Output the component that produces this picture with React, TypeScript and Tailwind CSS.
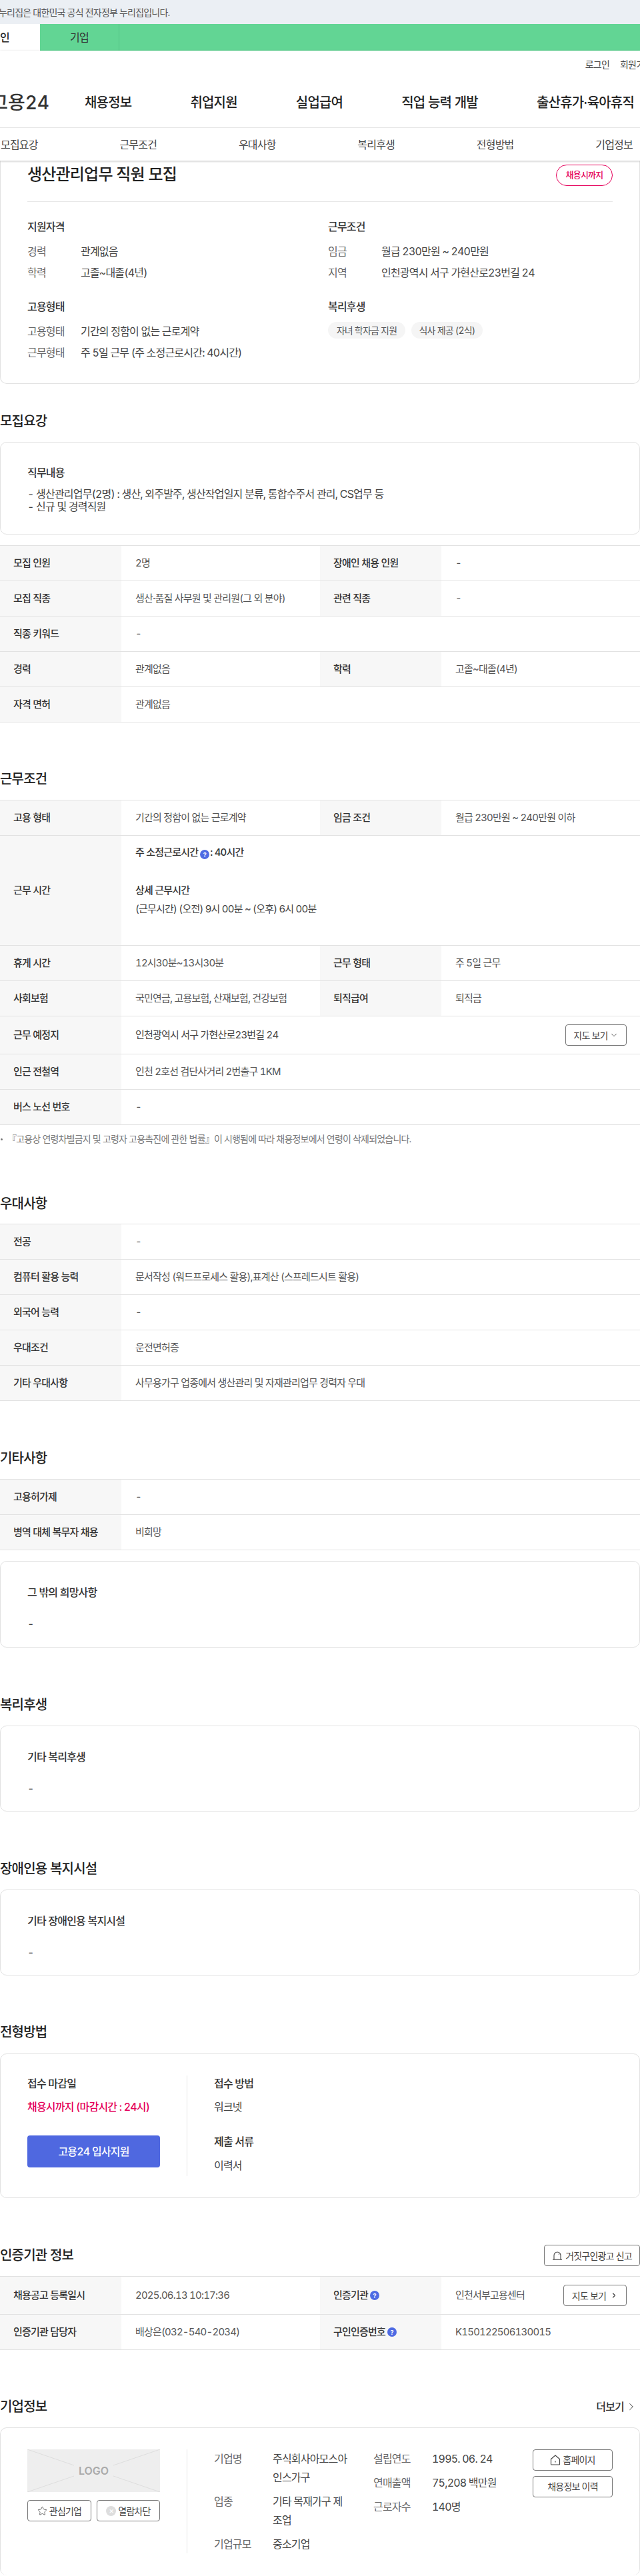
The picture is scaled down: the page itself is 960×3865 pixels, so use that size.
import { ChevronDown, ChevronRight, Star } from "lucide-react";
import type { ReactNode } from "react";

const FONT = "font-['Inter','Noto_Sans_CJK_KR','Noto_Sans',sans-serif]";

type Cell = { label: ReactNode; value: ReactNode };

function Help() {
  return (
    <span className="ml-[3px] mr-[1px] inline-flex h-[14px] w-[14px] items-center justify-center rounded-full bg-[#4f6be3] align-[-2px] text-[9px] font-bold leading-none tracking-normal text-white">
      ?
    </span>
  );
}

function HomeIcon() {
  return (
    <svg viewBox="0 0 16 16" fill="none" stroke="currentColor" strokeWidth="1.2" className="h-[16px] w-[16px] shrink-0">
      <path d="M1.5 6.5 8 1l6.5 5.5v7.7a.8.8 0 0 1-.8.8H2.3a.8.8 0 0 1-.8-.8Z" />
      <path d="M8 9.5V11.5" />
    </svg>
  );
}

function AlarmIcon() {
  return (
    <svg viewBox="0 0 16 14" fill="none" stroke="currentColor" strokeWidth="1.1" className="h-[14px] w-[16px] shrink-0">
      <path d="M3 13V7a5 5 0 0 1 10 0v6" />
      <path d="M1 13.2h14" />
      <path d="M10.5 4.5v1.5" />
    </svg>
  );
}

function SectionTitle({ children }: { children: ReactNode }) {
  return <h2 className="text-[20px] font-medium leading-[30px] text-[#222]">{children}</h2>;
}

function Row({ cells, height = "h-[53px]" }: { cells: Cell[]; height?: string }) {
  return (
    <div className={`flex border-b border-[#e2e2e2] ${height}`}>
      {cells.map((cell, i) => (
        <div key={i} className={`flex ${cells.length === 1 ? "w-full" : "w-1/2"}`}>
          <div className="flex w-[182px] shrink-0 items-center bg-[#f7f7f7] pl-[20px] font-medium text-[#333]">{cell.label}</div>
          <div className="flex min-w-0 flex-1 items-center pl-[21px] text-[#555]">{cell.value}</div>
        </div>
      ))}
    </div>
  );
}

function Table({ children }: { children: ReactNode }) {
  return <div className="border-t border-[#e2e2e2] text-[15px]">{children}</div>;
}

function Card({ children, className = "" }: { children: ReactNode; className?: string }) {
  return <div className={`rounded-[10px] border border-[#e2e2e2] ${className}`}>{children}</div>;
}

function TextCard({ title, body, className }: { title: string; body: string; className: string }) {
  return (
    <Card className={`px-[40px] ${className}`}>
      <div className="text-[16px] font-medium leading-[24px] text-[#333]">{title}</div>
      <div className="mt-[23px] text-[16px] leading-[24px] text-[#444]">{body}</div>
    </Card>
  );
}

function Summary({ rows }: { rows: [string, string][] }) {
  return (
    <div className="mt-[13px] flex flex-col gap-[8px] text-[16px] leading-[24px]">
      {rows.map(([label, value]) => (
        <div key={label} className="flex">
          <span className="w-[80px] shrink-0 text-[#666]">{label}</span>
          <span className="text-[#444]">{value}</span>
        </div>
      ))}
    </div>
  );
}

function OutlineButton({ children, className }: { children: ReactNode; className: string }) {
  return (
    <div className={`flex items-center justify-center rounded-[4px] border border-[#777] text-[14px] text-[#444] ${className}`}>
      {children}
    </div>
  );
}

export default function App() {
  return (
    <div className={`w-[960px] overflow-hidden bg-white tracking-[-0.05em] text-[#333] tabular-nums ${FONT}`}>
      <div className="flex h-[36px] items-center overflow-hidden bg-[#ebeff4] text-[14px] text-[#555]">
        <span className="ml-[-17px] whitespace-nowrap">이 누리집은 대한민국 공식 전자정부 누리집입니다.</span>
      </div>
      <div className="flex h-[40px] bg-[#62d594] text-[16px]">
        <div className="flex w-[60px] items-center justify-end whitespace-nowrap bg-white pr-[46px] font-medium text-[#222]">개인</div>
        <div className="flex w-[119px] items-center justify-center border-r border-[#55c587] text-[#333]">기업</div>
      </div>

      <header className="relative z-10 bg-white shadow-[0_1px_3px_rgba(0,0,0,0.25)]">
        <div className="flex h-[40px] items-center justify-end gap-[16px] whitespace-nowrap text-[14px] text-[#444]">
          <span>로그인</span>
          <span className="mr-[-20px] w-[50px]">회원가입</span>
        </div>
        <div className="flex h-[76px] items-center whitespace-nowrap border-b border-[#e6e6e6] text-[20px] font-medium text-[#222]">
          <div className="flex w-[127px] shrink-0 justify-end pr-[53px]">
            <span className="text-[28px] font-medium leading-none tracking-normal text-[#333]">고용24</span>
          </div>
          <nav className="flex gap-[88px]">
            <span>채용정보</span>
            <span>취업지원</span>
            <span>실업급여</span>
            <span>직업 능력 개발</span>
            <span>출산휴가·육아휴직</span>
          </nav>
        </div>
        <nav className="flex h-[49px] items-center justify-between pl-[1px] pr-[11px] text-[16px] text-[#444]">
          <span>모집요강</span>
          <span>근무조건</span>
          <span>우대사항</span>
          <span>복리후생</span>
          <span>전형방법</span>
          <span>기업정보</span>
        </nav>
      </header>

      <main>
        <Card className="h-[335px] rounded-t-none border-t-0 px-[40px]">
          <div className="flex h-[62px] items-start justify-between border-b border-[#e6e6e6] pt-[3px]">
            <h1 className="text-[24px] font-medium leading-[35px] text-[#222]">생산관리업무 직원 모집</h1>
            <span className="mt-[3px] flex h-[32px] w-[85px] items-center justify-center rounded-full border border-[#e5005a] text-[13px] font-medium text-[#e5005a]">
              채용시까지
            </span>
          </div>
          <div className="mt-[25px] grid grid-cols-[451px_1fr] gap-y-[27px]">
            <div>
              <div className="text-[16px] font-medium leading-[24px] text-[#333]">지원자격</div>
              <Summary rows={[["경력", "관계없음"], ["학력", "고졸~대졸(4년)"]]} />
            </div>
            <div>
              <div className="text-[16px] font-medium leading-[24px] text-[#333]">근무조건</div>
              <Summary rows={[["임금", "월급 230만원 ~ 240만원"], ["지역", "인천광역시 서구 가현산로23번길 24"]]} />
            </div>
            <div>
              <div className="text-[16px] font-medium leading-[24px] text-[#333]">고용형태</div>
              <Summary rows={[["고용형태", "기간의 정함이 없는 근로계약"], ["근무형태", "주 5일 근무 (주 소정근로시간: 40시간)"]]} />
            </div>
            <div>
              <div className="text-[16px] font-medium leading-[24px] text-[#333]">복리후생</div>
              <div className="mt-[11px] flex gap-[9px] text-[14px] text-[#555]">
                <span className="flex h-[25px] w-[116px] items-center justify-center rounded-full bg-[#f5f5f5]">자녀 학자금 지원</span>
                <span className="flex h-[25px] w-[107px] items-center justify-center rounded-full bg-[#f5f5f5]">식사 제공 (2식)</span>
              </div>
            </div>
          </div>
        </Card>

        <section className="pt-[41px]">
          <SectionTitle>모집요강</SectionTitle>
          <Card className="mt-[16px] h-[139px] px-[40px] pt-[33px]">
            <div className="text-[16px] font-medium leading-[24px] text-[#333]">직무내용</div>
            <p className="mt-[11px] text-[16px] leading-[19px] text-[#444]">
              - 생산관리업무(2명) : 생산, 외주발주, 생산작업일지 분류, 통합수주서 관리, CS업무 등
              <br />- 신규 및 경력직원
            </p>
          </Card>
          <div className="mt-[16px]">
            <Table>
              <Row cells={[{ label: "모집 인원", value: "2명" }, { label: "장애인 채용 인원", value: "-" }]} />
              <Row cells={[{ label: "모집 직종", value: "생산·품질 사무원 및 관리원(그 외 분야)" }, { label: "관련 직종", value: "-" }]} />
              <Row cells={[{ label: "직종 키워드", value: "-" }]} />
              <Row cells={[{ label: "경력", value: "관계없음" }, { label: "학력", value: "고졸~대졸(4년)" }]} />
              <Row cells={[{ label: "자격 면허", value: "관계없음" }]} />
            </Table>
          </div>
        </section>

        <section className="pt-[70px]">
          <SectionTitle>근무조건</SectionTitle>
          <div className="mt-[16px]">
            <Table>
              <Row cells={[{ label: "고용 형태", value: "기간의 정함이 없는 근로계약" }, { label: "임금 조건", value: "월급 230만원 ~ 240만원 이하" }]} />
              <Row
                height="h-[165px]"
                cells={[
                  {
                    label: "근무 시간",
                    value: (
                      <div className="w-full text-[#333]">
                        <div className="font-medium leading-[24px]">
                          주 소정근로시간
                          <Help />: 40시간
                        </div>
                        <div className="mt-[33px] font-medium leading-[24px]">상세 근무시간</div>
                        <div className="mt-[4px] leading-[24px] text-[#444]">(근무시간) (오전) 9시 00분 ~ (오후) 6시 00분</div>
                        <div className="h-[30px]" />
                      </div>
                    ),
                  },
                ]}
              />
              <Row cells={[{ label: "휴게 시간", value: "12시30분~13시30분" }, { label: "근무 형태", value: "주 5일 근무" }]} />
              <Row cells={[{ label: "사회보험", value: "국민연금, 고용보험, 산재보험, 건강보험" }, { label: "퇴직급여", value: "퇴직금" }]} />
              <Row
                height="h-[57px]"
                cells={[
                  {
                    label: "근무 예정지",
                    value: (
                      <div className="flex w-full items-center justify-between pr-[20px] text-[#444]">
                        <span>인천광역시 서구 가현산로23번길 24</span>
                        <OutlineButton className="h-[32px] w-[92px] gap-[2px]">
                          지도 보기
                          <ChevronDown size={14} strokeWidth={1.5} />
                        </OutlineButton>
                      </div>
                    ),
                  },
                ]}
              />
              <Row cells={[{ label: "인근 전철역", value: "인천 2호선 검단사거리 2번출구 1KM" }]} />
              <Row cells={[{ label: "버스 노선 번호", value: "-" }]} />
            </Table>
          </div>
          <p className="mt-[11px] flex items-center text-[14px] leading-[20px] text-[#777]">
            <span className="ml-[1px] mr-[7px] h-[3px] w-[3px] rounded-full bg-[#777]" />
            『고용상 연령차별금지 및 고령자 고용촉진에 관한 법률』이 시행됨에 따라 채용정보에서 연령이 삭제되었습니다.
          </p>
        </section>

        <section className="pt-[72px]">
          <SectionTitle>우대사항</SectionTitle>
          <div className="mt-[15px]">
            <Table>
              <Row cells={[{ label: "전공", value: "-" }]} />
              <Row cells={[{ label: "컴퓨터 활용 능력", value: "문서작성 (워드프로세스 활용),표계산 (스프레드시트 활용)" }]} />
              <Row cells={[{ label: "외국어 능력", value: "-" }]} />
              <Row cells={[{ label: "우대조건", value: "운전면허증" }]} />
              <Row cells={[{ label: "기타 우대사항", value: "사무용가구 업종에서 생산관리 및 자재관리업무 경력자 우대" }]} />
            </Table>
          </div>
        </section>

        <section className="pt-[71px]">
          <SectionTitle>기타사항</SectionTitle>
          <div className="mt-[16px]">
            <Table>
              <Row cells={[{ label: "고용허가제", value: "-" }]} />
              <Row cells={[{ label: "병역 대체 복무자 채용", value: "비희망" }]} />
            </Table>
          </div>
          <TextCard title="그 밖의 희망사항" body="-" className="mt-[16px] h-[130px] pt-[34px]" />
        </section>

        <section className="pt-[71px]">
          <SectionTitle>복리후생</SectionTitle>
          <TextCard title="기타 복리후생" body="-" className="mt-[16px] h-[129px] pt-[34px]" />
        </section>

        <section className="pt-[71px]">
          <SectionTitle>장애인용 복지시설</SectionTitle>
          <TextCard title="기타 장애인용 복지시설" body="-" className="mt-[16px] h-[129px] pt-[34px]" />
        </section>

        <section className="pt-[70px]">
          <SectionTitle>전형방법</SectionTitle>
          <Card className="mt-[17px] flex h-[217px] px-[40px] py-[32px] text-[16px]">
            <div className="w-[240px] shrink-0 border-r border-[#e6e6e6] pr-[40px]">
              <div className="font-medium leading-[24px] text-[#333]">접수 마감일</div>
              <div className="mt-[11px] font-medium leading-[24px] text-[#e5005a]">채용시까지 (마감시간 : 24시)</div>
              <div className="mt-[31px] flex h-[48px] w-[199px] items-center justify-center rounded-[4px] bg-[#4f68e0] font-medium text-white">고용24 입사지원</div>
            </div>
            <div className="pl-[40px]">
              <div className="font-medium leading-[24px] text-[#333]">접수 방법</div>
              <div className="mt-[11px] leading-[24px] text-[#444]">워크넷</div>
              <div className="mt-[28px] font-medium leading-[24px] text-[#333]">제출 서류</div>
              <div className="mt-[12px] leading-[24px] text-[#444]">이력서</div>
            </div>
          </Card>
        </section>

        <section className="pt-[70px]">
          <div className="flex items-center justify-between">
            <SectionTitle>인증기관 정보</SectionTitle>
            <OutlineButton className="h-[32px] w-[144px] gap-[4px]">
              <AlarmIcon />
              거짓구인광고 신고
            </OutlineButton>
          </div>
          <div className="mt-[15px]">
            <Table>
              <Row
                height="h-[57px]"
                cells={[
                  { label: "채용공고 등록일시", value: "2025.06.13 10:17:36" },
                  {
                    label: <>인증기관<Help /></>,
                    value: (
                      <div className="flex w-full items-center justify-between pr-[20px]">
                        <span>인천서부고용센터</span>
                        <OutlineButton className="h-[32px] w-[95px] gap-[6px]">
                          지도 보기
                          <ChevronRight size={12} strokeWidth={2.5} />
                        </OutlineButton>
                      </div>
                    ),
                  },
                ]}
              />
              <Row
                cells={[
                  { label: "인증기관 담당자", value: "배상은(032-540-2034)" },
                  { label: <>구인인증번호<Help /></>, value: "K150122506130015" },
                ]}
              />
            </Table>
          </div>
        </section>

        <section className="pt-[70px]">
          <div className="flex items-center justify-between">
            <SectionTitle>기업정보</SectionTitle>
            <span className="flex items-center gap-[2px] pr-[4px] text-[16px] font-medium text-[#333]">
              더보기
              <ChevronRight size={18} strokeWidth={1.25} />
            </span>
          </div>
          <Card className="mt-[16px] flex h-[222px] border-b-0 px-[40px] pt-[32px] text-[16px]">
            <div className="h-[156px] w-[240px] shrink-0 border-r border-[#e6e6e6] pr-[40px]">
              <div className="relative flex h-[64px] items-center justify-center bg-[#eeeeee]">
                <svg viewBox="0 0 199 64" preserveAspectRatio="none" className="absolute inset-0 h-full w-full" stroke="#dddddd" fill="none">
                  <path d="M0 0 70 24M129 24 199 0M199 64 129 40M70 40 0 64" />
                </svg>
                <span className="relative text-[16px] font-semibold tracking-normal text-[#aaaaaa]">LOGO</span>
              </div>
              <div className="mt-[12px] flex justify-between text-[14px]">
                <OutlineButton className="h-[32px] w-[96px] gap-[3px]">
                  <Star size={15} strokeWidth={1.25} />
                  관심기업
                </OutlineButton>
                <OutlineButton className="h-[32px] w-[95px] gap-[3px]">
                  <span className="flex h-[15px] w-[15px] items-center justify-center rounded-full bg-[#dddddd] text-[12px] leading-none text-white">×</span>
                  열람차단
                </OutlineButton>
              </div>
            </div>
            <div className="flex min-w-0 flex-1 pl-[40px] leading-[28px]">
              <dl className="w-[239px] shrink-0">
                <div className="flex">
                  <dt className="w-[88px] shrink-0 text-[#666]">기업명</dt>
                  <dd className="w-[113px] text-[#444]">주식회사아모스아인스가구</dd>
                </div>
                <div className="mt-[8px] flex">
                  <dt className="w-[88px] shrink-0 text-[#666]">업종</dt>
                  <dd className="w-[113px] text-[#444]">기타 목재가구 제조업</dd>
                </div>
                <div className="mt-[8px] flex">
                  <dt className="w-[88px] shrink-0 text-[#666]">기업규모</dt>
                  <dd className="text-[#444]">중소기업</dd>
                </div>
              </dl>
              <dl className="flex w-[239px] flex-col gap-[8px]">
                <div className="flex">
                  <dt className="w-[88px] shrink-0 text-[#666]">설립연도</dt>
                  <dd className="text-[#444]">1995. 06. 24</dd>
                </div>
                <div className="flex">
                  <dt className="w-[88px] shrink-0 text-[#666]">연매출액</dt>
                  <dd className="text-[#444]">75,208 백만원</dd>
                </div>
                <div className="flex">
                  <dt className="w-[88px] shrink-0 text-[#666]">근로자수</dt>
                  <dd className="text-[#444]">140명</dd>
                </div>
              </dl>
              <div className="flex w-[120px] shrink-0 flex-col gap-[8px]">
                <OutlineButton className="h-[32px] gap-[3px]">
                  <HomeIcon />
                  홈페이지
                </OutlineButton>
                <OutlineButton className="h-[32px]">채용정보 이력</OutlineButton>
              </div>
            </div>
          </Card>
        </section>
      </main>
    </div>
  );
}
